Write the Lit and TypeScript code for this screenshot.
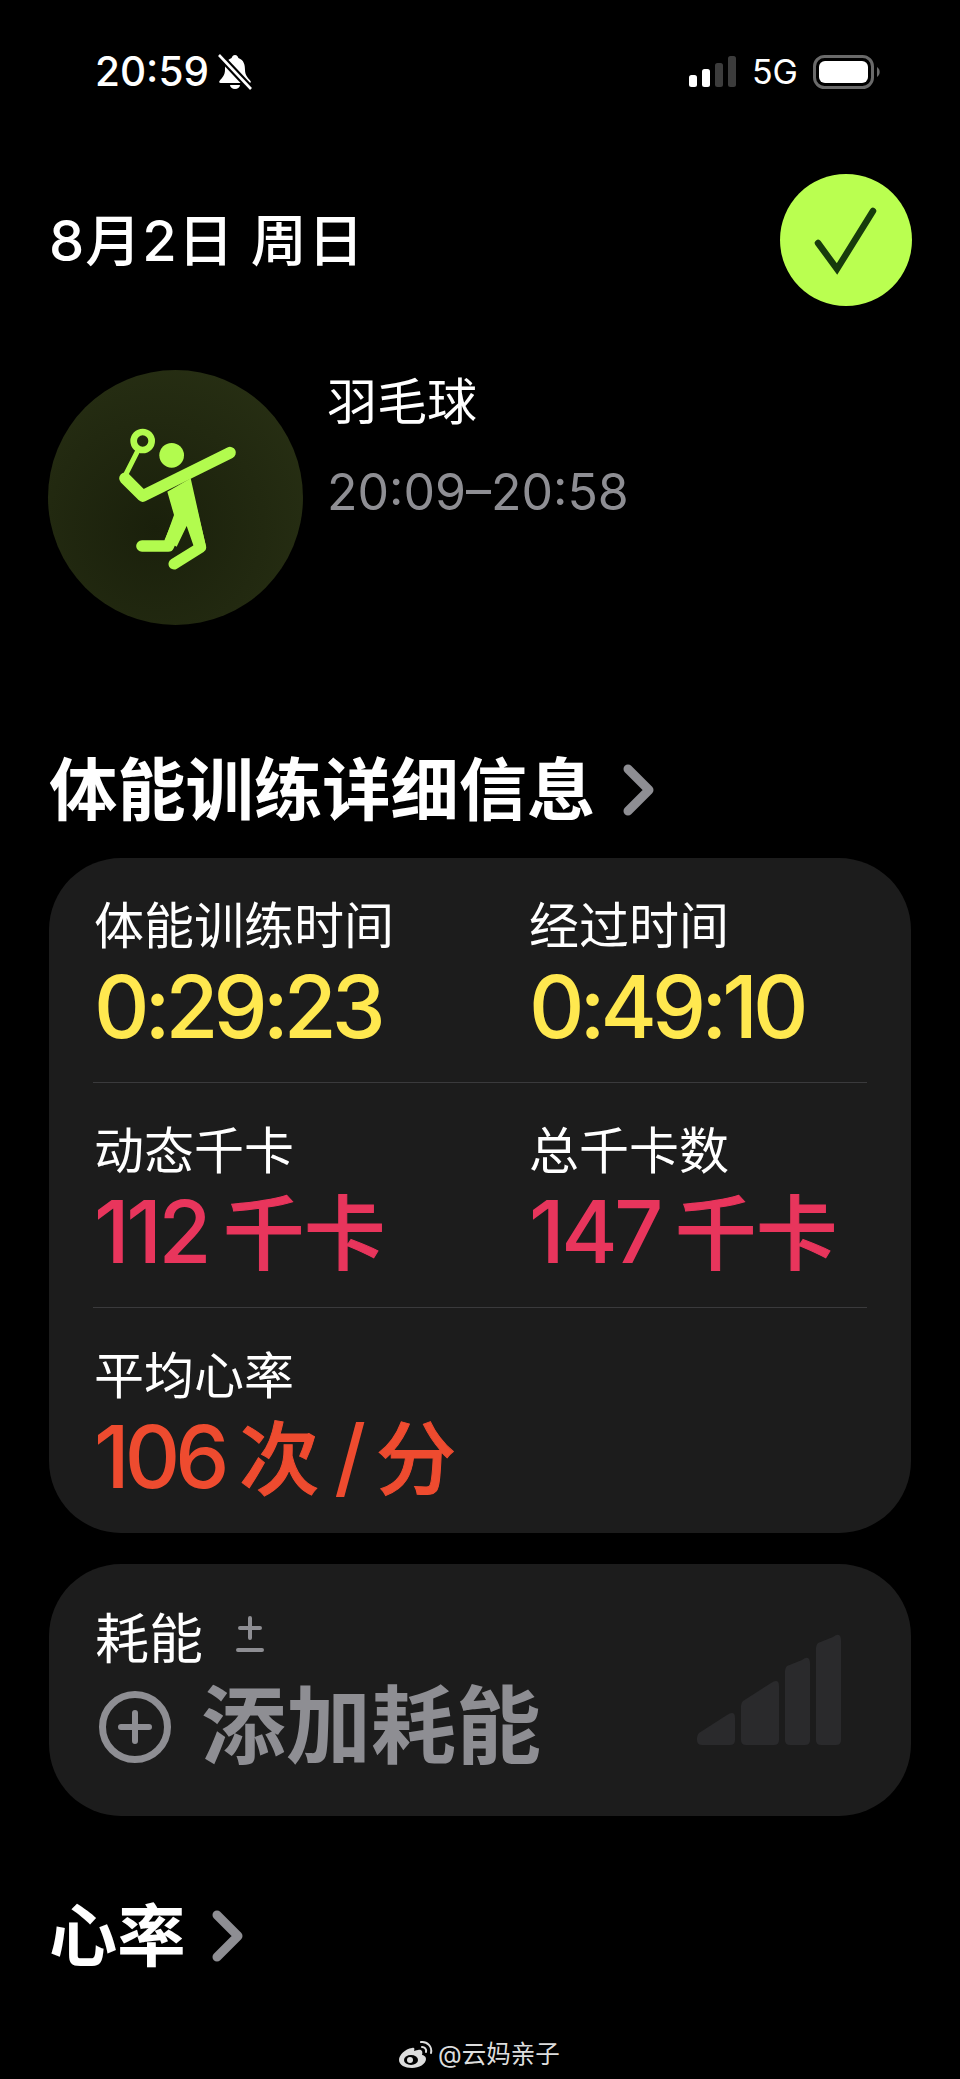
import { LitElement, html, css } from "lit";
import { customElement } from "lit/decorators.js";

@customElement("app-root")
export class AppRoot extends LitElement {
  static styles = css`
    :host { display: block; background: #000; }
    .page { position: relative; width: 960px; height: 2079px; background: #000; color: #fff; overflow: hidden; font-family: Inter, "Noto Sans CJK SC", sans-serif; box-sizing: border-box; padding-top: 55px; }
    .status { display: flex; justify-content: space-between; align-items: center; height: 34px; padding: 0 79px 0 95px; }
    .status-left, .status-right { display: flex; align-items: center; }
    .clock { font-size: 40.5px; font-weight: 500; line-height: 34px; }
    .bell { width: 36px; height: 36px; margin-left: 8px; display: block; }
    .bars { width: 48px; height: 32px; display: block; }
    .net { font-size: 34px; font-weight: 400; line-height: 34px; margin: 0 15px 0 15px; }
    .battery { width: 68px; height: 34px; display: block; }
    .date-row { display: flex; justify-content: space-between; align-items: center; height: 132px; margin-top: 85px; padding: 0 48px 0 49px; }
    .date { font-size: 56px; font-weight: 500; line-height: 62px; letter-spacing: 1px; margin-top: 1px; }
    .check { width: 132px; height: 132px; display: block; }
    .workout { display: flex; height: 255px; margin-top: 64px; padding-left: 48px; }
    .disc { width: 255px; height: 255px; border-radius: 50%; background: radial-gradient(circle at 42% 62%, #1a200b, #2a3215); flex: none; }
    .disc svg { display: block; width: 255px; height: 255px; }
    .workout-text { margin-left: 24px; }
    .sport { font-size: 50px; line-height: 60px; margin-top: 2px; }
    .span { font-size: 50px; line-height: 60px; color: #8e8e93; margin-top: 30px; }
    .heading { display: flex; align-items: center; height: 72px; padding-left: 49px; font-size: 68.3px; font-weight: 700; line-height: 72px; }
    .heading svg { display: block; width: 34px; height: 54px; margin-left: 27px; }
    .h1 { margin-top: 129px; }
    .card { background: #1c1c1c; border-radius: 72px; margin: 0 49px; }
    .stats { margin-top: 32px; }
    .row { display: grid; grid-template-columns: 435px 1fr; margin: 0 44px; padding-left: 1px; height: 225px; box-sizing: border-box; border-bottom: 1.5px solid #3a3a3c; padding-top: 38px; }
    .row:last-child { border-bottom: none; }
    .label { font-size: 50px; line-height: 60px; color: #fff; }
    .val { font-size: 86px; font-weight: 500; line-height: 90px; white-space: nowrap; letter-spacing: -5px; margin-top: 6px; }
    .u { font-size: 81px; letter-spacing: 0; -webkit-text-stroke: 1px currentColor; }
    .yellow { color: #ffe84f; }
    .pink { color: #e8355c; letter-spacing: -3.5px; word-spacing: -4px; }
    .red { color: #ee4b2f; word-spacing: -3px; }
    .red .u { font-size: 80px; }
    .energy { margin-top: 31px; height: 252px; box-sizing: border-box; padding: 41px 46px 0; display: grid; grid-template-columns: 1fr auto; }
    .energy-label { display: flex; align-items: center; height: 60px; font-size: 54px; }
    .pm { width: 28px; height: 38px; margin-left: 33px; display: block; }
    .add { display: flex; align-items: center; height: 90px; margin-top: 17px; }
    .plus { width: 76px; height: 76px; margin-left: 2px; display: block; }
    .add-text { font-size: 85px; font-weight: 700; line-height: 90px; color: #8e8e93; margin-left: 28px; }
    .levels { width: 146px; height: 112px; display: block; margin: 29px 22px 0 0; }
    .h2 { margin-top: 84px; }
    .h2 svg { margin-left: 25px; }
    .mark { position: absolute; left: 398px; top: 2038px; display: flex; align-items: center; color: #ddd; font-size: 24.5px; line-height: 32px; }
    .mark svg { width: 36px; height: 30px; display: block; margin-right: 4px; }
  `;

  stat(label: string, value: unknown, cls: string) {
    return html`<div><div class="label">${label}</div><div class="val ${cls}">${value}</div></div>`;
  }

  chevron() {
    return html`<svg viewBox="0 0 34 54"><path d="M6 6 L27 27 L6 48" fill="none" stroke="#8e8e93" stroke-width="9" stroke-linecap="round" stroke-linejoin="round"/></svg>`;
  }

  render() {
    return html`
      <div class="page">
        <div class="status">
          <div class="status-left">
            <span class="clock">20:59</span>
            <svg class="bell" viewBox="0 0 36 36">
              <path d="M18 1c-2 0-3 1.500-3.400 3C9 6 8 11 8 16c0 5-3 8-5.500 11-.8 1 0 2 1 2h29c1 0 1.800-1 1-2-2.500-3-5.500-6-5.500-11 0-5-1-10-6.600-12C21 2.500 20 1 18 1z" fill="#fff"/>
              <path d="M13 31a5 4 0 0 0 10 0z" fill="#fff"/>
              <path d="M2 1 L34 35" stroke="#000" stroke-width="7"/>
              <path d="M2 1 L34 35" stroke="#fff" stroke-width="2.600"/>
            </svg>
          </div>
          <div class="status-right">
            <svg class="bars" viewBox="0 0 48 32">
              <rect x="0" y="19" width="8" height="12" rx="2.500" fill="#fff"/>
              <rect x="13" y="13" width="8" height="18" rx="2.500" fill="#fff"/>
              <rect x="26" y="7" width="8" height="24" rx="2.500" fill="#3c3c3c"/>
              <rect x="39" y="0" width="8" height="31" rx="2.500" fill="#3c3c3c"/>
            </svg>
            <span class="net">5G</span>
            <svg class="battery" viewBox="0 0 68 34">
              <rect x="1.500" y="1.500" width="58" height="31" rx="10" fill="none" stroke="#6a6a6a" stroke-width="3"/>
              <rect x="6" y="6" width="49" height="22" rx="6" fill="#fff"/>
              <path d="M64 12 a6 6 0 0 1 0 10z" fill="#6a6a6a"/>
            </svg>
          </div>
        </div>

        <div class="date-row">
          <div class="date">8月2日 周日</div>
          <svg class="check" viewBox="0 0 132 132">
            <circle cx="66" cy="66" r="66" fill="#baff50"/>
            <path d="M38 69 L57 95 L93 37" fill="none" stroke="#173c0c" stroke-width="6.500" stroke-linecap="round" stroke-linejoin="miter"/>
          </svg>
        </div>

        <div class="workout">
          <div class="disc">
            <svg viewBox="54 60 765 765">
              <g fill="none" stroke="#b2fb4e" stroke-linecap="round" stroke-linejoin="round">
                <circle cx="338" cy="273" r="27" stroke-width="20"/>
                <path d="M322 305 L288 372" stroke-width="15"/>
                <path d="M285 385 L338 438 L600 308" stroke-width="35"/>
                <path d="M432 642 L512 592 L470 420" stroke-width="33"/>
                <path d="M336 588 L415 588 L452 500" stroke-width="35"/>
              </g>
              <circle cx="425" cy="316" r="37" fill="#b2fb4e"/>
              <path d="M412 425 L482 385 L528 590 L495 600 L470 528 L440 590 L405 570 L432 495 Z" fill="#b2fb4e"/>
            </svg>
          </div>
          <div class="workout-text">
            <div class="sport">羽毛球</div>
            <div class="span">20:09–20:58</div>
          </div>
        </div>

        <div class="heading h1">体能训练详细信息 ${this.chevron()}</div>

        <div class="card stats">
          <div class="row">
            ${this.stat("体能训练时间", "0:29:23", "yellow")}
            ${this.stat("经过时间", "0:49:10", "yellow")}
          </div>
          <div class="row">
            ${this.stat("动态千卡", html`112 <span class="u">千卡</span>`, "pink")}
            ${this.stat("总千卡数", html`147 <span class="u">千卡</span>`, "pink")}
          </div>
          <div class="row">
            ${this.stat("平均心率", html`106 <span class="u">次</span> / <span class="u">分</span>`, "red")}
          </div>
        </div>

        <div class="card energy">
          <div>
            <div class="energy-label">耗能
              <svg class="pm" viewBox="0 0 28 38">
                <path d="M14 2 V22 M4 12 H24 M2 34 H26" stroke="#8e8e93" stroke-width="4" stroke-linecap="round" fill="none"/>
              </svg>
            </div>
            <div class="add">
              <svg class="plus" viewBox="0 0 76 76">
                <circle cx="38" cy="38" r="32.500" fill="none" stroke="#8e8e93" stroke-width="7"/>
                <path d="M38 24 V52 M24 38 H52" stroke="#8e8e93" stroke-width="6" stroke-linecap="round"/>
              </svg>
              <span class="add-text">添加耗能</span>
            </div>
          </div>
          <svg class="levels" viewBox="0 0 146 112">
            <g fill="#2a2a2c">
              <path d="M0 104 Q0 101 2 99 L30 81 Q38 76 38 84 V106 Q38 111 33 111 H5 Q0 111 0 106z"/>
              <path d="M44 72 Q44 69 46 67 L74 49 Q82 44 82 52 V106 Q82 111 77 111 H49 Q44 111 44 106z"/>
              <path d="M88 37 Q88 34 90 32 L105 26 Q113 20 113 30 V106 Q113 111 108 111 H93 Q88 111 88 106z"/>
              <path d="M119 14 Q119 11 121 9 L136 3 Q144 -3 144 7 V106 Q144 111 139 111 H124 Q119 111 119 106z"/>
            </g>
          </svg>
        </div>

        <div class="heading h2">心率 ${this.chevron()}</div>

        <div class="mark">
          <svg viewBox="0 0 36 30">
            <path d="M14 9C7 10 1 16 1 21c0 5 6 8 13 8s14-4 14-9c0-3-3-4-4-4 1-3 0-6-4-5-2 0-3 1-4 1 1-3 0-4-2-3z" fill="#ddd"/>
            <ellipse cx="13" cy="21" rx="7" ry="5" fill="#000"/>
            <circle cx="12" cy="21" r="3" fill="#ddd"/>
            <path d="M23 3a9 9 0 0 1 10 11M24 8a4 4 0 0 1 4 5" fill="none" stroke="#ddd" stroke-width="2" stroke-linecap="round"/>
          </svg>
          <span>@云妈亲子</span>
        </div>
      </div>
    `;
  }
}
